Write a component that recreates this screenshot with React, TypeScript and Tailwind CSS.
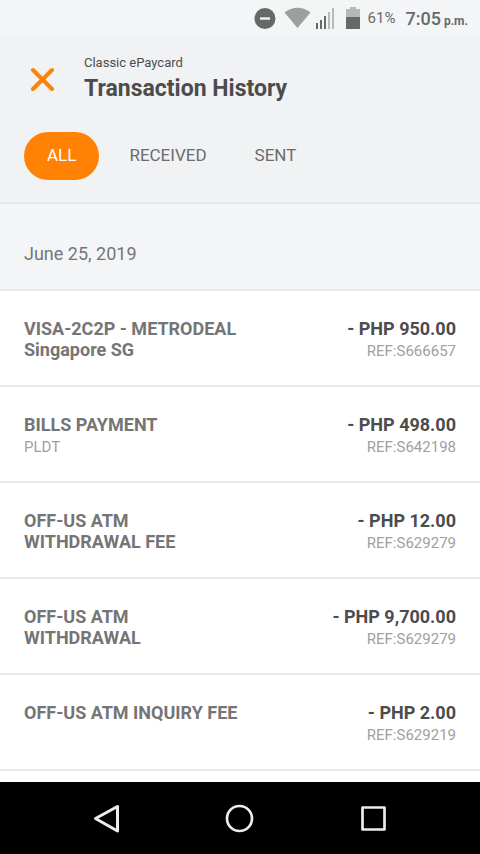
import React, { useState } from 'react';

const tabs = ['ALL', 'RECEIVED', 'SENT'];

const transactions = [
  { title: 'VISA-2C2P - METRODEAL Singapore SG', amount: '- PHP 950.00', reference: 'REF:S666657' },
  { title: 'BILLS PAYMENT', detail: 'PLDT', amount: '- PHP 498.00', reference: 'REF:S642198' },
  { title: 'OFF-US ATM WITHDRAWAL FEE', amount: '- PHP 12.00', reference: 'REF:S629279' },
  { title: 'OFF-US ATM WITHDRAWAL', amount: '- PHP 9,700.00', reference: 'REF:S629279' },
  { title: 'OFF-US ATM INQUIRY FEE', amount: '- PHP 2.00', reference: 'REF:S629219' },
];

function StatusBar() {
  return (
    <div className="flex h-9 items-center justify-end bg-[#f4f5f7] pr-3 text-[#676968]">
      {/* Do not disturb */}
      <svg className="mr-2 h-[22px] w-[22px]" viewBox="0 0 22 22">
        <circle cx="11" cy="11.5" r="10.5" fill="#676968" />
        <path d="M6 11.5h10" stroke="#f4f5f7" strokeWidth="2.4" />
      </svg>
      {/* Wifi */}
      <svg className="mr-[5px] h-[22px] w-[27px]" viewBox="0 0 27 22">
        <path d="M.5 5.5C8-1 19-1 26.500 5.500L13.500 21Z" fill="#9c9f9e" />
      </svg>
      {/* Signal */}
      <svg className="mr-[11px] h-[22px] w-[19px]" viewBox="0 0 19 22">
        <path d="M1 22v-6M5 22v-9M9 22V9" stroke="#676968" strokeWidth="2" />
        <path d="M13 22V5M17 22V1" stroke="#b7b9b9" strokeWidth="2" />
      </svg>
      {/* Battery */}
      <svg className="mr-2 h-[22px] w-[14px]" viewBox="0 0 14 22">
        <path d="M0 2h4V0h6v2h4v8H0Z" fill="#b7b9b9" />
        <path d="M0 10h14v12H0Z" fill="#676968" />
      </svg>
      <span className="mr-[10px] text-[15px]">61%</span>
      <span className="flex items-baseline gap-[3px]">
        <span className="text-[18px] font-medium">7:05</span>
        <span className="text-[12px] font-bold">p.m.</span>
      </span>
    </div>
  );
}

function Header() {
  const [active, setActive] = useState('ALL');

  return (
    <header className="border-b-2 border-[#e6e7e9] bg-[#f1f2f4] px-6 pt-[17px] pb-[22px]">
      <div className="flex items-center">
        <button aria-label="Close" className="mr-6 flex h-9 w-9 items-center justify-center">
          <svg className="h-6 w-6" viewBox="0 0 24 24" fill="none" stroke="#ff8205" strokeWidth="4" strokeLinecap="round">
            <path d="M3 3l19 19M22 3L3 22" />
          </svg>
        </button>
        <div>
          <p className="text-[13px] leading-5 text-[#4c4c4d]">Classic ePaycard</p>
          <h1 className="text-[23px] leading-8 font-bold text-[#4c4c4d]">Transaction History</h1>
        </div>
      </div>
      <nav className="mt-[27px] flex">
        {tabs.map((tab) => (
          <button
            key={tab}
            onClick={() => setActive(tab)}
            className={
              tab === active
                ? 'mr-1.5 h-12 rounded-full bg-[#ff8205] px-[23px] text-[17px] text-white'
                : 'h-12 rounded-full px-6 text-[17px] text-[#6b6b6c]'
            }
          >
            {tab}
          </button>
        ))}
      </nav>
    </header>
  );
}

function NavigationBar() {
  return (
    <div className="flex h-[72px] items-center justify-around bg-black px-10">
      <button aria-label="Back">
        <svg className="h-8 w-8" viewBox="0 0 32 32" fill="none" stroke="#ececec" strokeWidth="3" strokeLinejoin="round">
          <path d="M26.5 4.5v24.500L4.500 16.500Z" />
        </svg>
      </button>
      <button aria-label="Home">
        <svg className="h-8 w-8" viewBox="0 0 32 32" fill="none" stroke="#ececec" strokeWidth="2.7">
          <circle cx="15.5" cy="16.5" r="12.5" />
        </svg>
      </button>
      <button aria-label="Recent apps">
        <svg className="h-8 w-8" viewBox="0 0 32 32" fill="none" stroke="#ececec" strokeWidth="2.7" strokeLinejoin="round">
          <rect x="5.5" y="5.5" width="22" height="22" />
        </svg>
      </button>
    </div>
  );
}

export default function App() {
  return (
    <div className="flex min-h-screen flex-col bg-white font-['Roboto',sans-serif]">
      <StatusBar />
      <Header />
      <main className="flex-1">
        <h2 className="border-b-2 border-[#e9eaec] bg-[#f4f5f7] px-6 pt-[39px] pb-[25px] text-[18px] leading-[21px] text-[#757576]">
          June 25, 2019
        </h2>
        <ul>
          {transactions.map((item) => (
            <li key={item.title} className="grid min-h-24 grid-cols-2 border-b-2 border-[#ebebeb] px-6 pt-[27px] pb-6">
              <div>
                <h3 className="text-[18px] leading-[21px] font-bold text-[#757576]">{item.title}</h3>
                {item.detail && <p className="pt-[3px] text-[15px] leading-[18px] text-[#a0a0a0]">{item.detail}</p>}
              </div>
              <div className="text-right">
                <p className="text-[18px] leading-[21px] font-bold text-[#4c4c4d]">{item.amount}</p>
                <p className="pt-[3px] text-[15px] leading-[18px] text-[#a0a0a0]">{item.reference}</p>
              </div>
            </li>
          ))}
        </ul>
      </main>
      <NavigationBar />
    </div>
  );
}
